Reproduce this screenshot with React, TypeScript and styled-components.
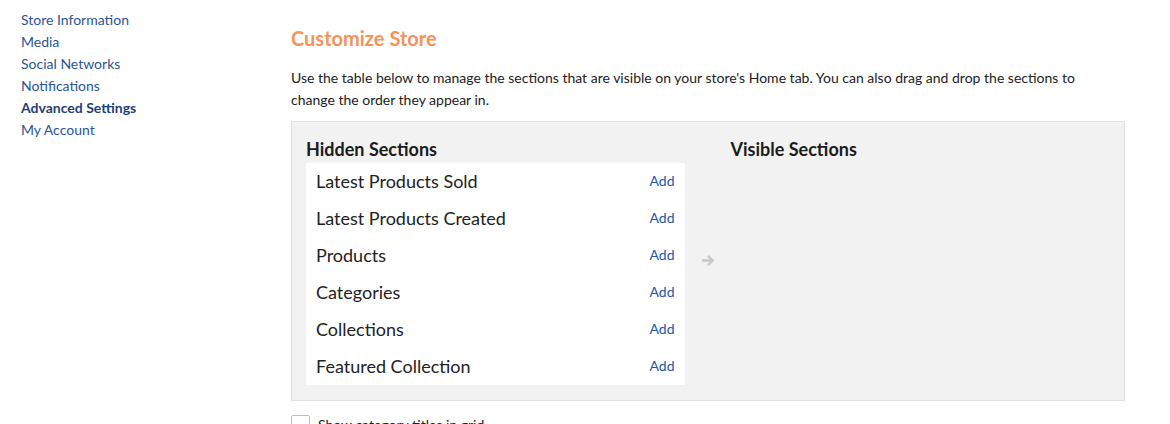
import styled, { createGlobalStyle } from "styled-components";

const GlobalStyle = createGlobalStyle`
  body {
    margin: 0;
    background: #fff;
    font-family: Lato, "Open Sans", Arial, sans-serif;
    color: #222;
  }
`;

const Page = styled.div`
  display: flex;
  width: 1170px;
  height: 424px;
  overflow: hidden;
`;

const Sidebar = styled.nav`
  width: 291px;
  flex-shrink: 0;
  padding: 9px 0 0 21px;
  box-sizing: border-box;
  display: flex;
  flex-direction: column;
`;

const NavLink = styled.a<{ $active?: boolean }>`
  font-size: 14px;
  line-height: 22px;
  color: ${(p) => (p.$active ? "#1d3f78" : "#2a5597")};
  font-weight: ${(p) => (p.$active ? 700 : 400)};
  text-decoration: none;
  cursor: pointer;
`;

const Main = styled.main`
  width: 834px;
  padding-top: 25px;
`;

const Title = styled.h1`
  margin: 0 0 16px;
  font-size: 20px;
  line-height: 26px;
  font-weight: 700;
  color: #f6925a;
`;

const Intro = styled.p`
  margin: 0 0 10px;
  padding-right: 14px;
  font-size: 14px;
  line-height: 22px;
  color: #222;
`;

const Panel = styled.div`
  display: flex;
  background: #f2f2f2;
  border: 1px solid #e1e1e1;
  padding: 14px 14px 15px;
  height: 280px;
  box-sizing: border-box;
`;

const Column = styled.div<{ $width: number }>`
  width: ${(p) => p.$width}px;
  display: flex;
  flex-direction: column;
`;

const ColumnTitle = styled.h2`
  margin: 0 0 1px;
  font-size: 18px;
  line-height: 26px;
  font-weight: 700;
  color: #1c1c1c;
`;

const SectionList = styled.ul`
  list-style: none;
  margin: 0;
  padding: 0;
  background: #fff;
`;

const SectionRow = styled.li`
  display: flex;
  align-items: center;
  justify-content: space-between;
  height: 37px;
  padding: 0 10px 2px;
  box-sizing: border-box;
`;

const SectionName = styled.span`
  font-size: 18px;
  color: #222;
`;

const AddLink = styled.a`
  font-size: 14px;
  color: #2456a8;
  cursor: pointer;
`;

const ArrowCell = styled.div`
  width: 46px;
  display: flex;
  align-items: center;
  justify-content: center;
  color: #c8c8c8;
`;

const OptionRow = styled.label`
  display: flex;
  align-items: center;
  gap: 8px;
  margin-top: 14px;
  font-size: 14px;
  color: #222;
`;

const CheckBox = styled.span`
  width: 17px;
  height: 17px;
  border: 1px solid #bdbdbd;
  border-radius: 2px;
  background: #fff;
`;

const navItems = [
  "Store Information",
  "Media",
  "Social Networks",
  "Notifications",
  "Advanced Settings",
  "My Account",
];

const hiddenSections = [
  "Latest Products Sold",
  "Latest Products Created",
  "Products",
  "Categories",
  "Collections",
  "Featured Collection",
];

export default function App() {
  return (
    <>
      <GlobalStyle />
      <Page>
        <Sidebar>
          {navItems.map((item) => (
            <NavLink key={item} $active={item === "Advanced Settings"}>
              {item}
            </NavLink>
          ))}
        </Sidebar>
        <Main>
          <Title>Customize Store</Title>
          <Intro>
            Use the table below to manage the sections that are visible on
            your store's Home tab. You can also drag and drop the sections to
            change the order they appear in.
          </Intro>
          <Panel>
            <Column $width={379}>
              <ColumnTitle>Hidden Sections</ColumnTitle>
              <SectionList>
                {hiddenSections.map((name) => (
                  <SectionRow key={name}>
                    <SectionName>{name}</SectionName>
                    <AddLink>Add</AddLink>
                  </SectionRow>
                ))}
              </SectionList>
            </Column>
            <ArrowCell>
              <svg width="14" height="13" viewBox="0 0 14 13" fill="none">
                <path
                  d="M1 6.5h10.5M7 1.8l4.7 4.7L7 11.2"
                  stroke="currentColor"
                  strokeWidth="2.4"
                />
              </svg>
            </ArrowCell>
            <Column $width={380}>
              <ColumnTitle>Visible Sections</ColumnTitle>
            </Column>
          </Panel>
          <OptionRow>
            <CheckBox />
            Show category titles in grid
          </OptionRow>
        </Main>
      </Page>
    </>
  );
}
